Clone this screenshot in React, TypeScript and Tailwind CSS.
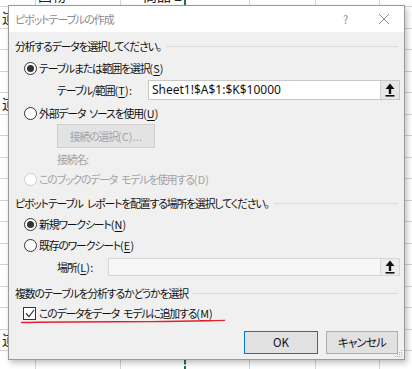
import React from "react";

const JP = { fontFamily: '"Noto Sans CJK JP", "Noto Sans", sans-serif', fontFeatureSettings: '"palt"' };

const Radio: React.FC<{ checked?: boolean; disabled?: boolean }> = ({ checked, disabled }) => (
  <span
    className={
      disabled
        ? "w-[13px] h-[13px] shrink-0 rounded-full border border-[#cfcfcf] bg-white flex items-center justify-center"
        : "w-[13px] h-[13px] shrink-0 rounded-full border border-[#333333] bg-white flex items-center justify-center"
    }
  >
    {checked && <span className="w-[7px] h-[7px] rounded-full bg-[#333333]" />}
  </span>
);

// mnemonic like (S), letter underlined unless plain
const Key: React.FC<{ k: string; plain?: boolean; tail?: string }> = ({ k, plain, tail }) => (
  <span className="tracking-[0.2px]">
    ({plain ? k : <span className="underline underline-offset-2 decoration-1">{k}</span>}){tail}
  </span>
);

const Sp = () => <span className="inline-block w-[4px]" />;

const UpArrow = () => (
  <svg width="10" height="14" viewBox="0 0 10 14">
    <path d="M5 0.5 L9.5 6 H6.2 V11 H3.8 V6 H0.5 Z" fill="#111" />
    <rect x="0.5" y="12" width="9" height="1.6" fill="#111" />
  </svg>
);

const SectionHeader: React.FC<{ children: React.ReactNode; className?: string }> = ({ children, className }) => (
  <div className={`flex items-center gap-[5px] pl-[6px] pr-[6px] ${className ?? ""}`}>
    <span className="whitespace-nowrap">{children}</span>
    <div className="flex-1 h-px bg-[#dcdcdc]" />
  </div>
);

const cols = [36, 85, 65, 64, 66, 64, 40];

const SheetRow: React.FC<{ cells?: string[] }> = ({ cells = [] }) => (
  <div className="flex h-[21.5px] border-b border-[#d4d4d4] shrink-0">
    {cols.map((w, i) => (
      <div
        key={i}
        style={{ width: w }}
        className={
          i === 2
            ? "shrink-0 h-full border-r-2 border-dashed border-[#217346] flex items-center justify-end pr-[2px]"
            : "shrink-0 h-full border-r border-[#d4d4d4] flex items-center pl-[2px]"
        }
      >
        <span className="whitespace-nowrap">{cells[i] ?? ""}</span>
      </div>
    ))}
  </div>
);

export default function App() {
  const rows = Array.from({ length: 17 });
  return (
    <div
      className="relative w-[412px] h-[369px] overflow-hidden bg-white text-[10.8px] tracking-[-1.1px] text-[#111]"
      style={JP}
    >
      {/* spreadsheet behind */}
      <div className="absolute inset-0 flex flex-col -mt-[14.5px] text-[14px] tracking-normal text-[#222]">
        <SheetRow cells={["", "国物", "商品 2", "", ""]} />
        {rows.map((_, i) => (
          <SheetRow key={i} cells={i === 0 || i === 4 || i === 15 ? ["道"] : []} />
        ))}
        <SheetRow cells={["", "倍局", "商品 6", "714000", ""]} />
      </div>

      {/* dialog */}
      <div className="absolute left-[8px] top-[5px] w-[397px] h-[355px] border border-[#9a9a9a] bg-[#f0f0f0] shadow-[2px_3px_6px_rgba(0,0,0,0.25)] flex flex-col">
        <div className="h-[26px] bg-white flex items-center pl-[6px] text-[#8c8c8c] text-[11px] shrink-0">
          <span className="flex-1">ピボットテーブルの作成</span>
          <span className="w-[20px] text-center text-[#8c8c8c] mr-[23px]">?</span>
          <svg width="12" height="12" viewBox="0 0 12 12" className="mr-[14px]">
            <path d="M1 1 L11 11 M11 1 L1 11" stroke="#8c8c8c" strokeWidth="1" />
          </svg>
        </div>

        <div className="flex flex-col flex-1 relative whitespace-nowrap">
          <SectionHeader className="h-[20px] mt-[4px]">分析するデータを選択してください。</SectionHeader>

          <div className="h-[24px] flex items-center gap-[2px] pl-[15px]">
            <Radio checked />
            <span>
              テーブルまたは範囲を選択<Key k="S" />
            </span>
          </div>

          <div className="h-[20px] flex items-center pl-[48px] pr-[4px]">
            <span className="w-[91px] shrink-0">
              テーブル/範囲<Key k="T" tail=":" />
            </span>
            <div className="flex-1 h-full bg-white border border-[#c8c8c8] flex items-center">
              <span
                className="flex-1 pl-[3px] text-[12px] tracking-normal"
                style={{ fontFamily: '"Noto Sans", sans-serif' }}
              >
                Sheet1!$A$1:$K$10000
              </span>
              <div className="w-[19px] h-[18px] bg-[#e8e8e8] border-l border-[#d0d0d0] flex items-center justify-center">
                <UpArrow />
              </div>
            </div>
          </div>

          <div className="h-[22px] mt-[2px] flex items-center gap-[2px] pl-[15px]">
            <Radio />
            <span>
              外部データ<Sp />ソースを使用<Key k="U" />
            </span>
          </div>

          <div className="pl-[48px]">
            <div className="w-[98px] h-[24px] bg-[#e3e3e3] border border-[#cfcfcf] flex items-center justify-center text-[#a3a3a3]">
              接続の選択<Key k="C" plain tail="..." />
            </div>
          </div>

          <div className="h-[20px] mt-[1px] flex items-center pl-[48px] text-[#a3a3a3]">接続名:</div>

          <div className="h-[20px] flex items-center gap-[2px] pl-[15px] text-[#a3a3a3]">
            <Radio disabled />
            <span>
              このブックのデータ<Sp />モデルを使用する<Key k="D" plain />
            </span>
          </div>

          <SectionHeader className="h-[24px] mt-[2px]">
            ピボットテーブル<Sp />レポートを配置する場所を選択してください。
          </SectionHeader>

          <div className="h-[18px] flex items-center gap-[2px] pl-[15px]">
            <Radio checked />
            <span>
              新規ワークシート<Key k="N" />
            </span>
          </div>

          <div className="h-[20px] mt-[2px] flex items-center gap-[2px] pl-[15px]">
            <Radio />
            <span>
              既存のワークシート<Key k="E" />
            </span>
          </div>

          <div className="h-[18px] mt-[3px] flex items-center pl-[48px] pr-[4px]">
            <span className="w-[51px] shrink-0">
              場所<Key k="L" tail=":" />
            </span>
            <div className="flex-1 h-full bg-[#f7f7f7] border border-[#d6d6d6] flex items-center justify-end">
              <div className="w-[19px] h-[16px] bg-[#ececec] border-l border-[#d6d6d6] flex items-center justify-center">
                <UpArrow />
              </div>
            </div>
          </div>

          <SectionHeader className="h-[24px] mt-[5px]">複数のテーブルを分析するかどうかを選択</SectionHeader>

          <div className="h-[16px] flex items-center gap-[3px] pl-[14px] relative">
            <span className="w-[13px] h-[13px] border border-[#333] bg-white flex items-center justify-center">
              <svg width="10" height="9" viewBox="0 0 10 9">
                <path d="M1 4.5 L4 7.5 L9 1" stroke="#333" strokeWidth="1.2" fill="none" />
              </svg>
            </span>
            <span>
              このデータをデータ<Sp />モデルに追加する<Key k="M" />
            </span>
            <svg className="absolute left-[11px] top-[14px]" width="206" height="6" viewBox="0 0 206 6">
              <path d="M1 3.5 C40 2.5, 90 2.8, 130 2.6 S190 1.6, 205 1.4" stroke="#e2222c" strokeWidth="1.4" fill="none" />
            </svg>
          </div>

          <div className="flex justify-end gap-[8px] pr-[6px] mt-[10px] tracking-normal text-[11.5px]">
            <div className="w-[74px] h-[23px] bg-[#e1e1e1] border border-[#0078d7] flex items-center justify-center">OK</div>
            <div className="w-[72px] h-[23px] bg-[#e1e1e1] border border-[#adadad] flex items-center justify-center tracking-[-0.8px]">
              キャンセル
            </div>
          </div>

          <svg className="absolute right-[1px] bottom-[1px]" width="10" height="10" viewBox="0 0 10 10">
            <g fill="#b5b5b5">
              <rect x="8" y="2" width="1" height="1" />
              <rect x="6" y="4" width="1" height="1" />
              <rect x="8" y="4" width="1" height="1" />
              <rect x="4" y="6" width="1" height="1" />
              <rect x="6" y="6" width="1" height="1" />
              <rect x="8" y="6" width="1" height="1" />
              <rect x="2" y="8" width="1" height="1" />
              <rect x="4" y="8" width="1" height="1" />
              <rect x="6" y="8" width="1" height="1" />
              <rect x="8" y="8" width="1" height="1" />
            </g>
          </svg>
        </div>
      </div>
    </div>
  );
}
